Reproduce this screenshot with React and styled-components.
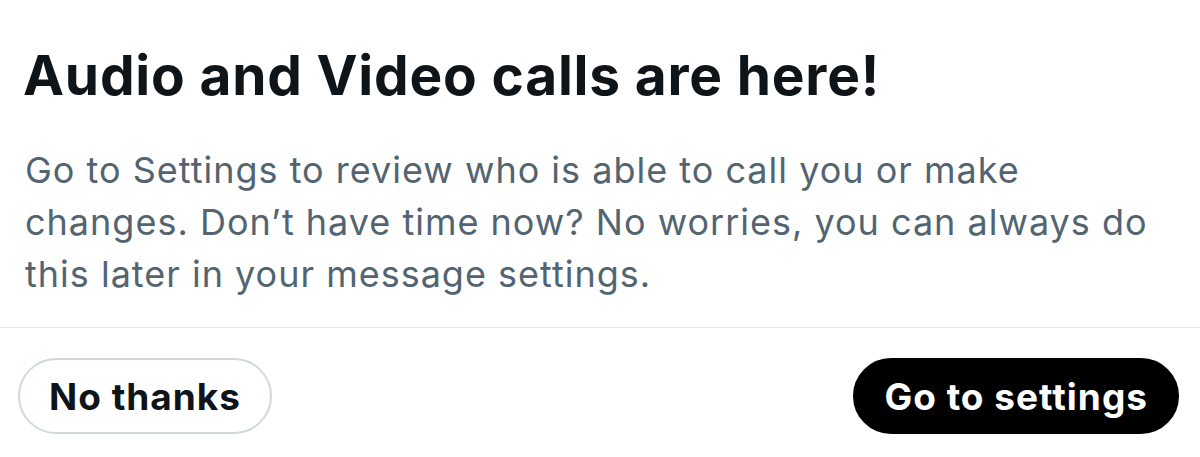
import React from 'react';
import styled, { createGlobalStyle } from 'styled-components';

const GlobalStyle = createGlobalStyle`
  html, body {
    margin: 0;
    padding: 0;
    background: #ffffff;
  }
  body {
    font-family: Inter, "Noto Sans", "Liberation Sans", sans-serif;
  }
`;

const Sheet = styled.div`
  width: 1200px;
  height: 457px;
  background: #ffffff;
  display: flex;
  flex-direction: column;
  overflow: hidden;
`;

const Body = styled.div`
  padding: 42px 23px 0 23px;
`;

const Title = styled.h1`
  margin: 0;
  font-size: 55px;
  font-weight: 700;
  line-height: 66px;
  color: #0f1419;
  letter-spacing: 0.8px;
`;

const Text = styled.p`
  margin: 36px 0 0 2px;
  font-size: 36px;
  font-weight: 400;
  line-height: 52px;
  color: #536471;
  letter-spacing: 1px;
`;

const Divider = styled.hr`
  margin: 27px 0 0 0;
  border: none;
  height: 1px;
  background: #e1e6ea;
`;

const Actions = styled.div`
  display: flex;
  align-items: flex-start;
  justify-content: space-between;
  padding: 30px 21px 0 18px;
`;

const Pill = styled.button`
  height: 76px;
  padding: 0 29px;
  border-radius: 38px;
  font-family: inherit;
  font-size: 37px;
  font-weight: 700;
  letter-spacing: 1px;
  cursor: pointer;
  border: 2px solid ${p => (p.$primary ? '#000000' : '#cfd9de')};
  background: ${p => (p.$primary ? '#000000' : '#ffffff')};
  color: ${p => (p.$primary ? '#ffffff' : '#0f1419')};
`;

export default function App() {
  return (
    <>
      <GlobalStyle />
      <Sheet>
        <Body>
          <Title>Audio and Video calls are here!</Title>
          <Text>
            Go to Settings to review who is able to call you or make<br />
            changes. Don’t have time now? No worries, you can always do<br />
            this later in your message settings.
          </Text>
        </Body>
        <Divider />
        <Actions>
          <Pill>No thanks</Pill>
          <Pill $primary>Go to settings</Pill>
        </Actions>
      </Sheet>
    </>
  );
}
